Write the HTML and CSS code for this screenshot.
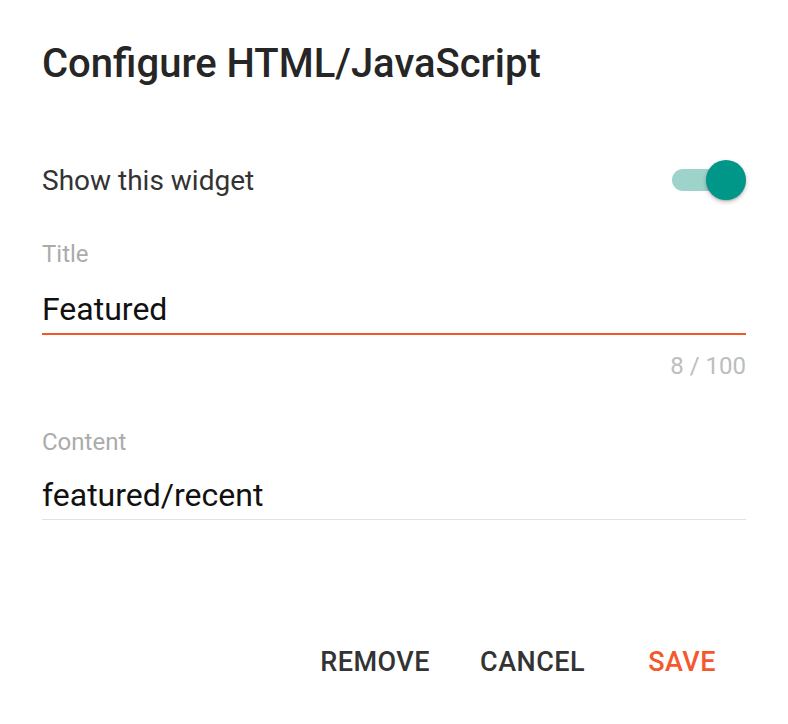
FILE: index.html
```html
<!DOCTYPE html>
<html lang="en">
<head>
<meta charset="utf-8">
<title>Configure HTML/JavaScript</title>
<link rel="stylesheet" href="styles.css">
</head>
<body>
<div class="dialog">
  <h1 class="dialog-title">Configure HTML/JavaScript</h1>
  <div class="switch-row">
    <span class="switch-label">Show this widget</span>
    <span class="switch" role="switch" aria-checked="true">
      <span class="switch-track"></span>
      <span class="switch-thumb"></span>
    </span>
  </div>
  <div class="field">
    <label class="field-label">Title</label>
    <div class="field-input focused">Featured</div>
    <div class="field-counter">8 / 100</div>
  </div>
  <div class="field field-content">
    <label class="field-label">Content</label>
    <div class="field-input">featured/recent</div>
  </div>
  <div class="actions">
    <button class="btn">REMOVE</button>
    <button class="btn">CANCEL</button>
    <button class="btn btn-primary">SAVE</button>
  </div>
</div>
</body>
</html>
```
FILE: styles.css
```css
html, body {
  margin: 0;
  padding: 0;
  background: #ffffff;
}
body {
  font-family: Roboto, "Noto Sans", Arial, sans-serif;
  color: #212121;
}
.dialog {
  padding: 42px 42px 0 42px;
  display: flex;
  flex-direction: column;
}
.dialog-title {
  margin: 0;
  font-size: 40px;
  line-height: 44px;
  font-weight: 500;
  color: #262626;
}
.switch-row {
  margin-top: 74px;
  height: 40px;
  display: flex;
  align-items: center;
  justify-content: space-between;
}
.switch-label {
  font-size: 28px;
  color: #333333;
}
.switch {
  position: relative;
  width: 74px;
  height: 40px;
  display: block;
}
.switch-track {
  position: absolute;
  left: 0;
  top: 9px;
  width: 66px;
  height: 22px;
  border-radius: 11px;
  background: #9ed3cb;
}
.switch-thumb {
  position: absolute;
  right: 0;
  top: 0;
  width: 40px;
  height: 40px;
  border-radius: 50%;
  background: #009688;
  box-shadow: 0 2px 4px rgba(0,0,0,0.25), 0 1px 1px rgba(0,0,0,0.12);
}
.field {
  display: flex;
  flex-direction: column;
  margin-top: 40px;
}
.field-label {
  font-size: 24px;
  line-height: 28px;
  color: #ababab;
}
.field-input {
  margin-top: 21px;
  font-size: 32px;
  line-height: 40px;
  color: #111111;
  padding-bottom: 4px;
  border-bottom: 1px solid #e2e2e2;
}
.field-input.focused {
  border-bottom: 2px solid #f05a28;
}
.field-counter {
  margin-top: 17px;
  align-self: flex-end;
  font-size: 24px;
  line-height: 28px;
  color: #bdbdbd;
}
.field-content {
  margin-top: 48px;
}
.field-content .field-input {
  margin-top: 19px;
}
.actions {
  margin-top: 124px;
  display: flex;
  justify-content: flex-end;
}
.btn {
  font-family: Roboto, "Noto Sans", Arial, sans-serif;
  font-size: 27px;
  line-height: 36px;
  font-weight: 500;
  letter-spacing: 0.5px;
  color: #333333;
  background: transparent;
  border: 0;
  padding: 0 25px;
  margin: 0;
}
.btn-primary {
  color: #f4582b;
  padding: 0 30px 0 38px;
}
```
